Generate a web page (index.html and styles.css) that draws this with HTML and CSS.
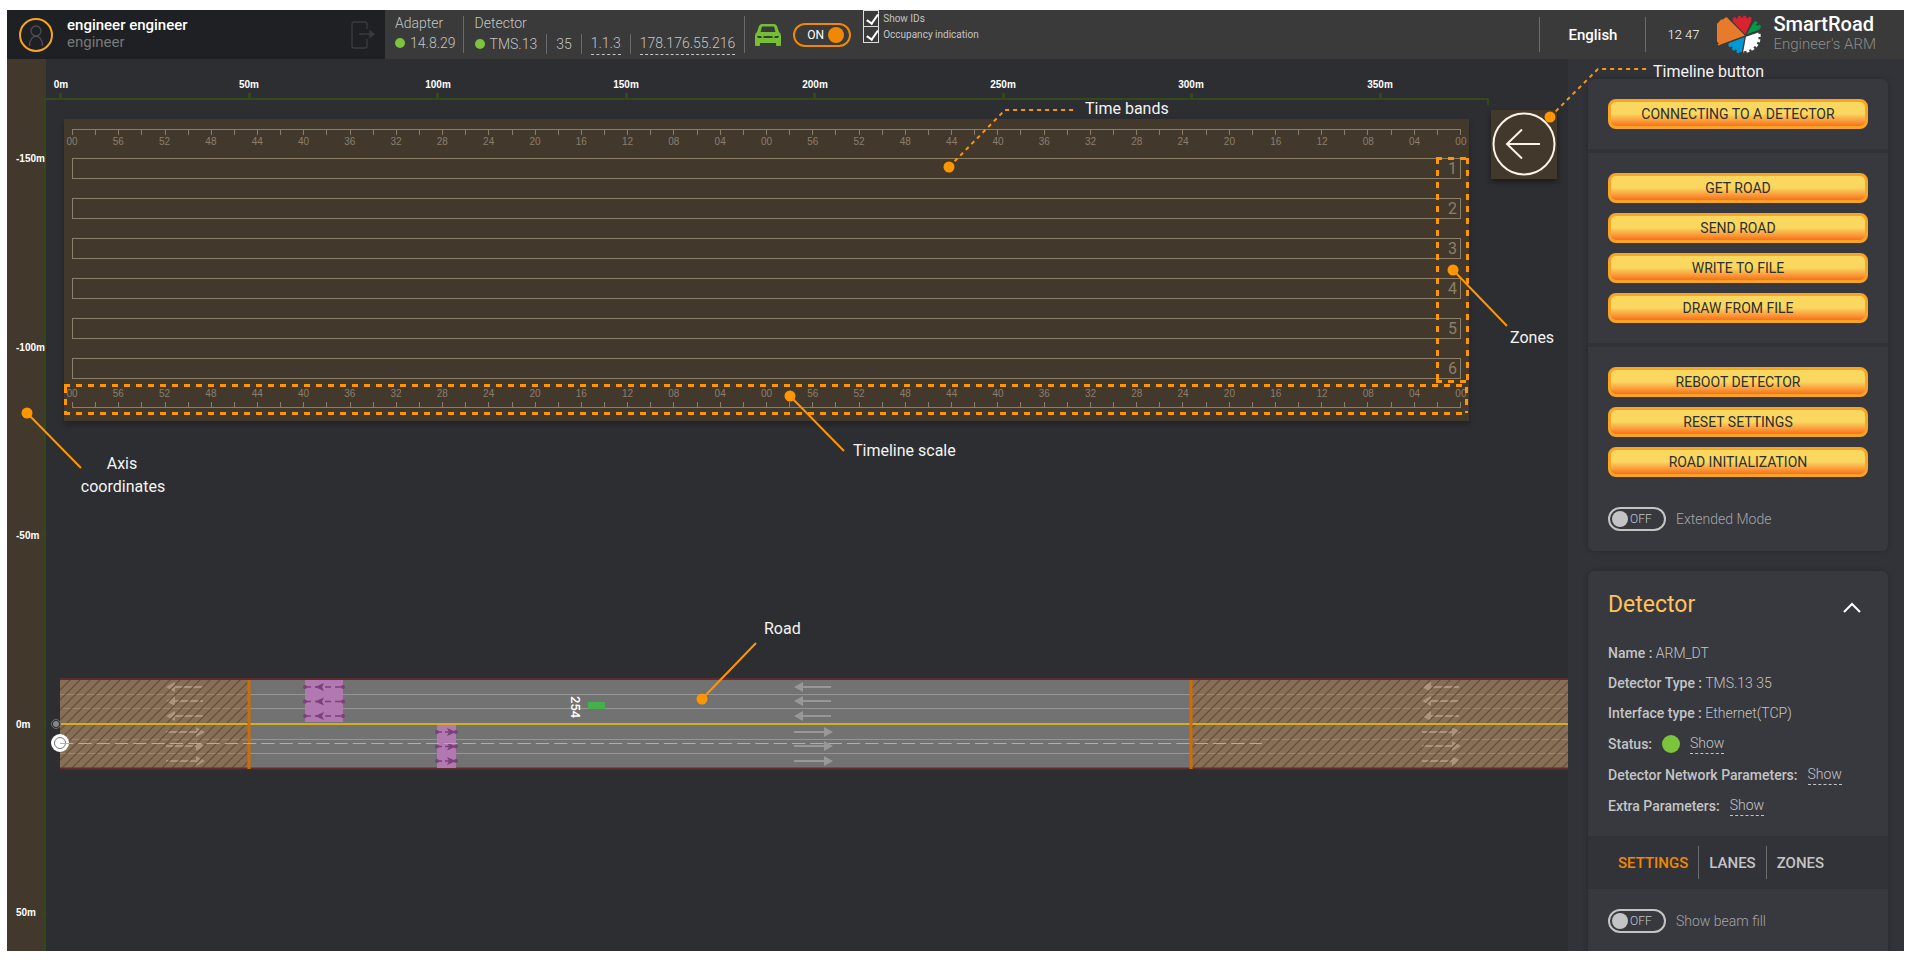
FILE: index.html
```html
<!DOCTYPE html>
<html lang="en">
<head>
<meta charset="utf-8">
<title>SmartRoad – Engineer's ARM</title>
<link rel="stylesheet" href="styles.css">
</head>
<body>
<div class="app">
  <header class="topbar">
    <div class="user">
      <svg class="avatar" viewBox="0 0 34 34" width="34" height="34" fill="none"><circle cx="17" cy="17" r="16" stroke="#f9a424" stroke-width="2"/><g stroke="#4d4e51" stroke-width="1.3"><circle cx="17" cy="13" r="5"/><path d="M10.500 28c0-13 13-13 13 0"/></g></svg>
      <div class="user-text"><span class="user-name">engineer engineer</span><span class="user-role">engineer</span></div>
      <button class="logout" aria-label="Log out"><svg viewBox="0 0 24 28" width="24" height="28" fill="none" stroke="#3a3b3e" stroke-width="1.4"><path d="M16 8V3q0-2-2-2H3Q1 1 1 3v22q0 2 2 2h11q2 0 2-2v-7M8 13h12"/><path d="M19 10l4 3-4 3z" fill="#3a3b3e"/></svg></button>
    </div>
    <div class="info">
      <div class="group">
        <span>Adapter</span>
        <span class="line"><i class="dot"></i>14.8.29</span>
      </div>
      <div class="group ruled">
        <span>Detector</span>
        <span class="line"><i class="dot"></i>TMS.13<b class="sep"></b>35<b class="sep"></b><a href="#version">1.1.3</a><b class="sep"></b><a href="#address">178.176.55.216</a></span>
      </div>
    </div>
    <div class="display">
      <svg class="car" viewBox="0 0 26 22" width="26" height="22" fill="#75bf34"><path fill-rule="evenodd" d="M7 0h12q2 0 3 2l2 6q2 1 2 4v9q0 1-1 1h-3q-1 0-1-1v-2H5v2q0 1-1 1H1q-1 0-1-1v-9q0-3 2-4l2-6q1-2 3-2zM7 2.500 5.500 8h15L19 2.500zM2 12l1 2h4l-1-2zM20 12l-1 2h4l1-2zM8.500 12v2h9v-2z"/></svg>
      <label class="switch on"><input type="checkbox" checked aria-label="Vehicles"><span>ON</span></label>
      <div class="checks">
        <label><input type="checkbox" checked>Show IDs</label>
        <label><input type="checkbox" checked>Occupancy indication</label>
      </div>
    </div>
    <div class="right">
      <button class="lang">English</button>
      <time class="clock">12 47</time>
      <svg class="logo" viewBox="11 10 140 124" width="46" height="41">
        <g stroke-dasharray="9 7" stroke-width="9" fill="none">
          <path fill="#e87a2c" d="M96 75 43 22A46 46 0 0 0 20 103z"/><path stroke="#e87a2c" d="M43 24A46 46 0 0 0 20 103"/>
          <path fill="#d9232e" d="M97 72 57 30Q86 12 117 27z"/><path stroke="#d9232e" d="M60 27Q88 12 116 25"/>
          <path fill="#009a49" d="M101 71 122 36Q136 44 142 56z"/><path stroke="#009a49" d="M125 34Q139 42 144 57"/>
          <path fill="#fff" d="M99 79 137 66Q144 114 91 124z"/><path stroke="#fff" d="M139 70Q144 115 92 125"/>
          <path fill="#0099d8" d="M95 80 46 99Q59 119 86 126z"/><path stroke="#0099d8" d="M48 101Q60 120 86 127"/>
        </g>
      </svg>
      <div class="brand"><strong>SmartRoad</strong><span>Engineer's ARM</span></div>
    </div>
  </header>

  <main class="main">
    <section class="stage">
      <svg class="scene" aria-label="Road plan">
        <defs>
          <pattern id="hatch" width="10" height="10" patternUnits="userSpaceOnUse"><path d="M-1 11 11-1M-1 1 1-1M9 11l2-2" stroke="#6d4e34" stroke-width="1.300"/></pattern>
          <g id="left"><path d="M0 0l9-5v4h28v2H9v4z"/></g>
          <g id="right"><path d="M39 0l-9-5v4H0v2h30v4z"/></g>
          <g id="six"><use href="#left" y="687"/><use href="#left" y="701"/><use href="#left" y="716"/><use href="#right" y="732"/><use href="#right" y="746"/><use href="#right" y="761"/></g>
        </defs>
        <g transform="translate(-7 -59)">
          <g fill="#34491b">
            <rect x="44" y="98" width="2" height="900"/><rect x="44" y="98" width="1445" height="2"/><rect x="1487" y="98" width="2" height="7"/>
            <path d="M59 93h3v5h-3zM248 93h3v5h-3zM436 93h3v5h-3zM625 93h3v5h-3zM813 93h3v5h-3zM1002 93h3v5h-3zM1190 93h3v5h-3zM1379 93h3v5h-3zM40 158h5v1h-5zM40 347h5v1h-5zM40 535h5v1h-5zM40 724h5v1h-5zM40 912h5v1h-5z"/>
          </g>
          <g class="axis-x"><text x="61" y="88">0m</text><text x="249" y="88">50m</text><text x="438" y="88">100m</text><text x="626" y="88">150m</text><text x="815" y="88">200m</text><text x="1003" y="88">250m</text><text x="1191" y="88">300m</text><text x="1380" y="88">350m</text></g>
          <g class="axis-y"><text x="16" y="162">-150m</text><text x="16" y="351">-100m</text><text x="16" y="539">-50m</text><text x="16" y="728">0m</text><text x="16" y="916">50m</text></g>
          <rect x="60" y="679" width="1508" height="90" fill="#727272"/>
          <path d="M60 694.500h1508M60 708.500h1508M60 739.500h1508M60 753.500h1508" stroke="#959595"/>
          <g fill="#989898"><use href="#six" x="794"/></g>
          <g fill="#856f58"><rect x="60" y="680" width="188" height="88"/><rect x="1192" y="680" width="376" height="88"/></g>
          <path d="M60 694.500h188M60 708.500h188M60 739.500h188M60 753.500h188M1192 694.500h376M1192 708.500h376M1192 739.500h376M1192 753.500h376" stroke="#9b8570"/>
          <g fill="#ab957f"><use href="#six" x="166"/><use href="#six" x="1422"/></g>
          <g fill="url(#hatch)"><rect x="60" y="680" width="188" height="88"/><rect x="1192" y="680" width="376" height="88"/></g>
          <path d="M60 679h1508M60 768.500h1508" stroke="#612b32" stroke-width="2"/>
          <g fill="#b278b1"><rect x="305" y="680" width="38" height="42"/><rect x="437" y="725" width="19" height="43"/></g>
          <g stroke="#794079" stroke-width="1.500" fill="#794079">
            <path d="M305 687h38M305 701.500h38M305 716h38" stroke-dasharray="6 4"/><path d="M437 732h19M437 746.500h19M437 761h19" stroke-dasharray="5 3"/>
            <path stroke="none" d="M315 687l9-4-2 4 2 4zM315 701.500l9-4-2 4 2 4zM315 716l9-4-2 4 2 4zM456 732l-9-4 2 4-2 4zM456 746.500l-9-4 2 4-2 4zM456 761l-9-4 2 4-2 4z"/>
            <path stroke-width="4" stroke-linecap="round" d="M305 687h0M343 687h0M305 701.500h0M343 701.500h0M305 716h0M343 716h0M437 732h0M456 732h0M437 746.500h0M456 746.500h0M437 761h0M456 761h0"/>
          </g>
          <path d="M60 724h1508" stroke="#d6ad20" stroke-width="2"/>
          <path d="M249 680v89M1191 680v89" stroke="#d06c04" stroke-width="3"/>
          <circle cx="56" cy="724" r="3" fill="#85868a"/><circle cx="56" cy="724" r="4.500" fill="none" stroke="#6c6d70"/>
          <circle cx="60" cy="743" r="9" fill="#fff"/><circle cx="60" cy="743" r="5.500" fill="none" stroke="#777"/>
          <path d="M60 743.500h1202" stroke="#f3a42b" stroke-dasharray="13.300 5"/>
          <rect x="588" y="702" width="17" height="7" fill="#45b04c"/>
          <text class="vehicle-id" transform="translate(571 696) rotate(90)">254</text>
        </g>
      </svg>
      <div class="workspace">
        <div class="timeline">
          <div class="scale">
            <div class="ticks"></div>
            <div class="nums"><span>00</span><span>56</span><span>52</span><span>48</span><span>44</span><span>40</span><span>36</span><span>32</span><span>28</span><span>24</span><span>20</span><span>16</span><span>12</span><span>08</span><span>04</span><span>00</span><span>56</span><span>52</span><span>48</span><span>44</span><span>40</span><span>36</span><span>32</span><span>28</span><span>24</span><span>20</span><span>16</span><span>12</span><span>08</span><span>04</span><span>00</span></div>
          </div>
          <div class="bands"><div>1</div><div>2</div><div>3</div><div>4</div><div>5</div><div>6</div></div>
          <div class="scale bottom">
            <div class="ticks"></div>
            <div class="nums"><span>00</span><span>56</span><span>52</span><span>48</span><span>44</span><span>40</span><span>36</span><span>32</span><span>28</span><span>24</span><span>20</span><span>16</span><span>12</span><span>08</span><span>04</span><span>00</span><span>56</span><span>52</span><span>48</span><span>44</span><span>40</span><span>36</span><span>32</span><span>28</span><span>24</span><span>20</span><span>16</span><span>12</span><span>08</span><span>04</span><span>00</span></div>
          </div>
        </div>
        <button class="timeline-btn" aria-label="Timeline"><svg viewBox="0 0 66 69" width="66" height="69" fill="none" stroke="#fdf2e3" stroke-width="2"><circle cx="33" cy="34" r="30.500"/><path d="M49 34H16M31 19.500 16 34l15 14.500"/></svg></button>
      </div>
    </section>

    <aside class="side">
      <div class="card">
        <div class="block"><button class="action">CONNECTING TO A DETECTOR</button></div>
        <div class="block"><button class="action">GET ROAD</button><button class="action">SEND ROAD</button><button class="action">WRITE TO FILE</button><button class="action">DRAW FROM FILE</button></div>
        <div class="block"><button class="action">REBOOT DETECTOR</button><button class="action">RESET SETTINGS</button><button class="action">ROAD INITIALIZATION</button>
          <label class="option spaced"><span class="switch"><input type="checkbox"><span>OFF</span></span>Extended Mode</label></div>
      </div>
      <div class="card">
        <div class="detector">
          <div class="card-head"><h2>Detector</h2><button class="fold" aria-label="Collapse"><svg viewBox="0 0 18 11" width="18" height="11" fill="none" stroke="#fff" stroke-width="2"><path d="M1 10l8-8 8 8"/></svg></button></div>
          <p><b>Name :</b> ARM_DT</p>
          <p><b>Detector Type :</b> TMS.13 35</p>
          <p><b>Interface type :</b> Ethernet(TCP)</p>
          <p class="row"><b>Status:</b><i class="status"></i><a href="#status">Show</a></p>
          <p class="row"><b>Detector Network Parameters:</b><a href="#network">Show</a></p>
          <p class="row"><b>Extra Parameters:</b><a href="#extra">Show</a></p>
        </div>
        <nav class="tabs"><button class="active">SETTINGS</button><button>LANES</button><button>ZONES</button></nav>
        <div class="block last"><label class="option"><span class="switch"><input type="checkbox"><span>OFF</span></span>Show beam fill</label></div>
      </div>
    </aside>

    <svg class="callouts">
      <g transform="translate(-7 -59)">
        <g fill="none" stroke="#ff9500" stroke-width="3" stroke-dasharray="6 6"><path d="M64 385.500h1404M1466.500 387v26M64 413.500h1404M65.500 387v26"/><path d="M1436 158.500h33M1467.500 158v224M1436 381.500h33M1437.500 158v224"/></g>
        <g fill="none" stroke="#ff9500" stroke-width="2"><path d="M949 167l56-57h71M1550 117l48-48h49" stroke-dasharray="4 4"/><path d="M1453 270l54 56M790 396l54 55M27 413l54 55M702 699l54-56"/></g>
        <g fill="#ff9500"><circle cx="949" cy="167" r="5.500"/><circle cx="1550" cy="117" r="5.500"/><circle cx="1453" cy="270" r="5.500"/><circle cx="790" cy="396" r="5.500"/><circle cx="27" cy="413" r="5.500"/><circle cx="702" cy="699" r="5.500"/></g>
        <g class="notes"><text x="1085" y="114">Time bands</text><text x="1653" y="77">Timeline button</text><text x="1510" y="343">Zones</text><text x="853" y="456">Timeline scale</text><text x="764" y="634">Road</text><text x="122" y="469" text-anchor="middle">Axis</text><text x="123" y="492" text-anchor="middle">coordinates</text></g>
      </g>
    </svg>
  </main>
</div>
</body>
</html>
```
FILE: styles.css
```css
* { box-sizing: border-box; }
body { margin: 0; padding: 10px 7px; background: #fff; font-family: Roboto, "Liberation Sans", sans-serif; font-size: 14px; font-weight: 300; color: #c4c4c4; }
button { font: inherit; color: inherit; background: none; border: 0; padding: 0; }
a { color: inherit; text-decoration: none; border-bottom: 1px dashed #c4c4c4; }
p, h2 { margin: 0; }
input { margin: 0; appearance: none; }
.app { display: flex; flex-direction: column; height: calc(100vh - 20px); overflow: hidden; background: #2d2e32; }

.topbar { display: flex; height: 49px; flex: none; background: #393a39; }
.user { display: flex; align-items: center; width: 378px; padding: 0 10px 0 12px; background: #1f2023; }
.user-text { display: flex; flex-direction: column; flex: 1; margin-left: 14px; padding-bottom: 2px; font-size: 15px; line-height: 17px; }
.user-name { color: #fff; font-weight: 500; }
.user-role { color: #77787a; font-weight: 400; }
.logout { display: flex; }
.info { display: flex; padding-left: 10px; }
.group { position: relative; display: flex; flex-direction: column; padding-top: 3px; line-height: 20px; }
.ruled { margin-left: 7px; padding: 3px 9px 0 11px; border: solid #6a6b6b; border-width: 0 1px; border-image: linear-gradient(transparent 7px, #6a6b6b 7px 42px, transparent 42px) 1; }
.line { display: flex; align-items: center; }
.line a { height: 22px; line-height: 20px; }
.dot { width: 10px; height: 10px; margin-right: 5px; border-radius: 50%; background: #7bc43c; }
.sep { width: 1px; height: 20px; margin: 0 9px; background: #6a6b6b; }
.display { display: flex; align-items: center; }
.car { margin: 0 12px 0 10px; }
.switch { position: relative; display: flex; align-items: center; width: 58px; height: 24px; border: 2px solid #c4c4c4; border-radius: 12px; font-size: 12px; }
.switch input { position: absolute; left: 2px; width: 16px; height: 16px; border-radius: 50%; background: #c4c4c4; }
.switch span { margin-left: 20px; }
.switch.on { border-color: #f08705; color: #fff; font-weight: 400; }
.switch.on input { left: auto; right: 5px; background: #f08705; }
.switch.on span { margin-left: 12px; }
.checks { align-self: flex-start; margin-left: 12px; font-size: 10px; }
.checks label { display: flex; align-items: center; gap: 4px; height: 16px; font-weight: 400; }
.checks input { position: relative; width: 16px; height: 17px; border: 1px solid #ddd; }
.checks input::after { content: ""; position: absolute; left: 5px; top: 1px; width: 5px; height: 10px; border: solid #fff; border-width: 0 2px 2px 0; transform: rotate(35deg); }
.right { display: flex; align-items: center; margin-left: auto; padding-right: 28px; color: #fff; }
.lang { height: 35px; padding: 0 28px; border: solid #6a6b6b; border-width: 0 1px; font-size: 15px; font-weight: 500; }
.clock { margin: 0 18px 0 21px; font-size: 13px; }
.brand { display: flex; flex-direction: column; margin-left: 10px; padding-bottom: 2px; }
.brand strong { font-size: 20px; font-weight: 500; line-height: 20px; }
.brand span { font-size: 15px; line-height: 20px; color: #8c8c8c; }

.main { position: relative; display: flex; flex: 1; min-height: 0; }
.stage { position: relative; flex: 1; min-width: 0; overflow: hidden; background: linear-gradient(90deg, #43382c 39px, transparent 39px); }
.scene, .callouts { position: absolute; inset: 0; width: 100%; height: 100%; }
.callouts { pointer-events: none; }
.axis-x, .axis-y { font: bold 10px "Liberation Sans", sans-serif; fill: #fff; }
.axis-x { text-anchor: middle; }
.vehicle-id { font-size: 13px; font-weight: 500; fill: #fff; }
.notes { font-size: 16px; font-weight: 400; fill: #f4f4f4; }

.workspace { position: relative; display: flex; align-items: flex-start; gap: 22px; padding: 51px 11px 0 57px; }
.timeline { flex: 1; margin-top: 9px; padding: 10px 8px 13px; background: #43382c; box-shadow: 0 4px 5px rgba(0, 0, 0, .25); }
.scale { display: flex; flex-direction: column; height: 29px; color: #8b7f6c; }
.ticks { height: 6px; border: solid #8b7f6c; border-width: 1px 1px 0 0; background: repeating-linear-gradient(90deg, #8b7f6c 0 1px, transparent 1px calc(100% / 60)); }
.nums { display: flex; justify-content: space-between; margin: 0 -8px; font: 10px/12px "Liberation Sans", sans-serif; }
.nums span { width: 16px; text-align: center; }
.scale .nums { padding-top: 1px; }
.scale.bottom { flex-direction: column-reverse; height: 20px; margin-top: 9px; }
.bottom .ticks { border-width: 0 1px 1px 0; }
.scale.bottom .nums { padding: 0 0 2px; }
.bands { display: grid; gap: 19px; }
.bands div { height: 21px; padding-right: 3px; border: 1px solid #8b7f6c; color: #8b7f6c; font-size: 16px; font-weight: 400; line-height: 20px; text-align: right; }
.timeline-btn { display: flex; background: #43382c; box-shadow: 0 3px 5px rgba(0, 0, 0, .4); }

.side { display: flex; flex-direction: column; gap: 20px; width: 336px; flex: none; padding: 20px 16px 0 20px; overflow: hidden; background: #323338; }
.card { flex: none; border-radius: 6px; background: #38393f; box-shadow: 0 0 6px rgba(0, 0, 0, .2); }
.block { display: flex; flex-direction: column; gap: 10px; padding: 20px; }
.block + .block { border-top: 4px solid #323338; }
.last { padding-bottom: 40px; }
.action { height: 30px; border: 3px solid #f9a424; border-radius: 8px; background: linear-gradient(#fad75e 50%, #f9d25c 52%, #fb6f1d); color: #2d2e32; font-weight: 400; line-height: 22px; }
.option { display: flex; align-items: center; gap: 10px; color: #a5a5a7; }
.option .switch { color: #c4c4c4; }
.spaced { margin-top: 20px; }
.detector { display: flex; flex-direction: column; gap: 14px; padding: 20px 20px 22px; }
.detector p { line-height: 16px; }
.detector b { font-weight: 500; }
.card-head { display: flex; align-items: center; justify-content: space-between; padding: 0 7px 12px 0; }
h2 { color: #fdc25c; font-size: 23px; font-weight: 400; line-height: 28px; }
.fold { display: flex; margin-top: 5px; }
.detector .row { display: flex; align-items: center; gap: 10px; height: 17px; }
.row a { line-height: 20px; }
.status { width: 18px; height: 18px; border-radius: 50%; background: #7bc43c; }
.tabs { display: flex; align-items: center; height: 53px; padding: 0 20px; background: #323338; }
.tabs button { height: 33px; padding: 0 10px; font-size: 15px; font-weight: 500; }
.tabs button + button { border-left: 1px solid #6a6b6b; }
.tabs .active { color: #f08705; }
```
